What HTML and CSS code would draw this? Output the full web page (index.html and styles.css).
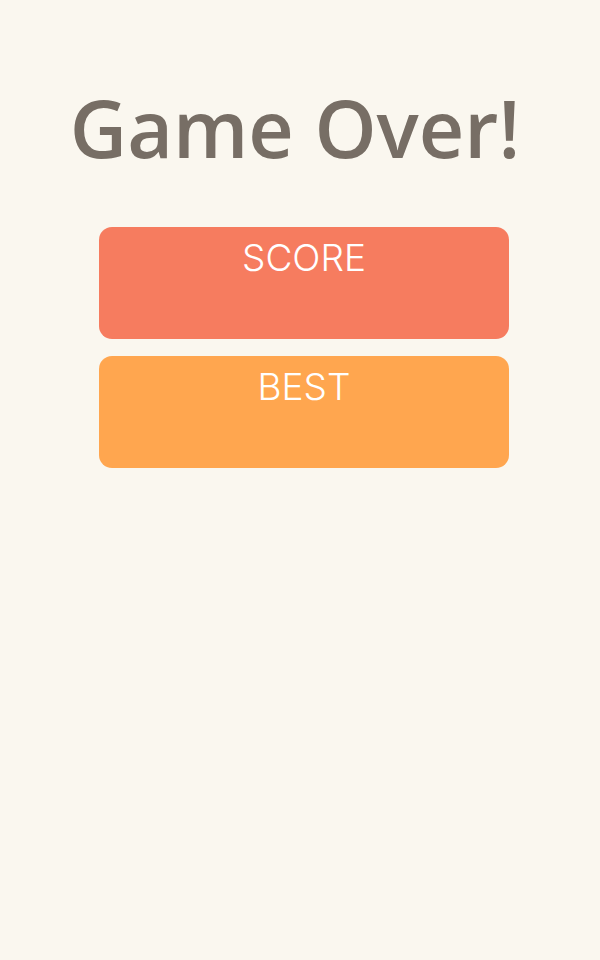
FILE: index.html
```html
<!DOCTYPE html>
<html>
<head>
<meta charset="utf-8">
<link rel="stylesheet" href="styles.css">
</head>
<body>
<main class="screen">
  <h1 class="title">Game Over!</h1>
  <section class="cards">
    <div class="card card-score"><span class="label">SCORE</span></div>
    <div class="card card-best"><span class="label">BEST</span></div>
  </section>
</main>
</body>
</html>
```

FILE: styles.css
```css
html, body {
  margin: 0;
  padding: 0;
  background: #faf7ef;
}
.screen {
  width: 600px;
  height: 960px;
  display: flex;
  flex-direction: column;
  align-items: center;
  font-family: "Open Sans", "Noto Sans", sans-serif;
}
.title {
  margin: 72px 10px 0 0;
  font-size: 79px;
  font-weight: 600;
  line-height: 112px;
  color: #776e65;
  letter-spacing: 0;
}
.cards {
  margin-top: 43px;
  display: flex;
  flex-direction: column;
  gap: 17px;
  width: 410px;
  margin-left: 8px;
}
.card {
  height: 112px;
  border-radius: 13px;
  display: flex;
  justify-content: center;
  align-items: flex-start;
}
.card-score { background: #f67c5f; }
.card-best { background: #ffa64f; }
.label {
  color: #ffffff;
  font-family: "Inter", sans-serif;
  font-weight: 300;
  font-size: 37px;
  line-height: 1;
  margin-top: 12px;
}
```
